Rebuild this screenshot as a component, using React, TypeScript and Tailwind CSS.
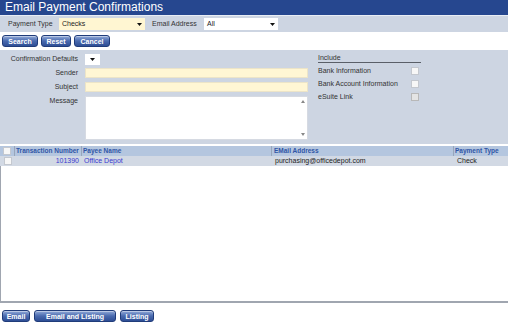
import React from "react";

function Btn({ label, width }: { label: string; width: string }) {
  return (
    <div
      className={`${width} h-[12px] rounded-[3px] border border-[#203c7a] bg-linear-to-b from-[#93abd9] via-[#4a6aae] to-[#2e4e95] text-white font-bold text-[7px] leading-none flex items-center justify-center shadow-[inset_0_1px_0_rgba(255,255,255,0.4)]`}
    >
      {label}
    </div>
  );
}

function Arrow() {
  return (
    <svg width="5" height="3" viewBox="0 0 5 3">
      <path d="M0 0h5L2.5 3z" fill="#111" />
    </svg>
  );
}

function Check({ disabled }: { disabled?: boolean }) {
  return (
    <div
      className={`w-[8px] h-[8px] border ${
        disabled ? "border-[#b8b8b8] bg-[#e4e4e4]" : "border-[#c4c8cf] bg-[#f7f7f7]"
      }`}
    />
  );
}

export default function App() {
  return (
    <div className="w-[508px] h-[328px] bg-white flex flex-col font-['Liberation_Sans',Arial,sans-serif] text-[7px] text-[#333] overflow-hidden">
      {/* title */}
      <div className="h-[15px] bg-[#26478f] text-white text-[12px] leading-[14px] px-[5px] border-b border-[#e8edf5] box-content">
        Email Payment Confirmations
      </div>

      {/* filter row */}
      <div className="h-[16px] bg-[#cdd5e2] flex items-center">
        <span className="ml-[8px] w-[51px]">Payment Type</span>
        <div className="w-[86px] h-[12px] bg-[#fff6d2] flex items-center justify-between px-[3px]">
          <span className="text-[#222]">Checks</span>
          <Arrow />
        </div>
        <span className="ml-[7px] w-[52px]">Email Address</span>
        <div className="w-[74px] h-[12px] bg-white flex items-center justify-between px-[3px]">
          <span className="text-[#222]">All</span>
          <Arrow />
        </div>
      </div>

      {/* top buttons */}
      <div className="h-[18px] flex items-center gap-[3px] pl-[2px]">
        <Btn label="Search" width="w-[36px]" />
        <Btn label="Reset" width="w-[30px]" />
        <Btn label="Cancel" width="w-[36px]" />
      </div>

      {/* form panel */}
      <div className="h-[94px] bg-[#cdd5e2] flex pt-[4px]">
        <div className="flex flex-col">
          <div className="flex items-center h-[11px]">
            <span className="w-[78px] text-right whitespace-nowrap">Confirmation Defaults</span>
            <div className="ml-[7px] w-[15px] h-[11px] bg-white flex items-center justify-center">
              <Arrow />
            </div>
          </div>
          <div className="flex items-center h-[10px] mt-[3px]">
            <span className="w-[78px] text-right">Sender</span>
            <div className="ml-[7px] w-[223px] h-[10px] bg-[#fff6d4] border border-[#ece4c8]" />
          </div>
          <div className="flex items-center h-[10px] mt-[4px]">
            <span className="w-[78px] text-right">Subject</span>
            <div className="ml-[7px] w-[223px] h-[10px] bg-[#fff6d4] border border-[#ece4c8]" />
          </div>
          <div className="flex items-start h-[44px] mt-[4px]">
            <span className="w-[78px] text-right leading-[9px]">Message</span>
            <div className="ml-[7px] w-[223px] h-[44px] bg-white border border-[#d6dae2] flex justify-end">
              <div className="w-[8px] flex flex-col justify-between items-center py-[3px]">
                <svg width="4" height="3" viewBox="0 0 4 3">
                  <path d="M0 3h4L2 0z" fill="#888" />
                </svg>
                <svg width="4" height="3" viewBox="0 0 4 3">
                  <path d="M0 0h4L2 3z" fill="#888" />
                </svg>
              </div>
            </div>
          </div>
        </div>

        <div className="ml-[10px] w-[103px] flex flex-col">
          <div className="h-[8px] leading-[8px] border-b border-[#5a5f68] box-content">Include</div>
          <div className="flex items-center justify-between h-[8px] mt-[4px] pr-[2px]">
            <span>Bank Information</span>
            <Check />
          </div>
          <div className="flex items-center justify-between h-[8px] mt-[5px] pr-[2px]">
            <span>Bank Account Information</span>
            <Check />
          </div>
          <div className="flex items-center justify-between h-[8px] mt-[5px] pr-[2px]">
            <span>eSuite Link</span>
            <Check disabled />
          </div>
        </div>
      </div>

      {/* grid */}
      <div className="h-[2px] bg-white" />
      <div className="h-[10px] bg-[#b4c6df] flex items-center font-bold text-[6.5px] text-[#2f55a6] whitespace-nowrap">
        <div className="w-[15px] h-full flex items-center justify-center border-r border-[#98a6bb]">
          <Check />
        </div>
        <div className="w-[67px] h-full pl-[1px] leading-[10px] border-r border-[#98a6bb] overflow-hidden">
          Transaction Number
        </div>
        <div className="w-[189px] h-full pl-[1px] leading-[10px]">Payee Name</div>
        <div className="w-[182px] h-full pl-[2px] leading-[10px] border-l border-[#98a6bb]">EMail Address</div>
        <div className="flex-1 h-full pl-[1px] leading-[10px] border-l border-[#98a6bb]">Payment Type</div>
      </div>
      <div className="h-[10px] bg-[#d2d9e4] flex items-center whitespace-nowrap">
        <div className="w-[15px] flex items-center justify-center">
          <Check />
        </div>
        <div className="w-[64px] text-right text-[#3a3ad0]">101390</div>
        <div className="w-[192px] pl-[5px] text-[#3a3ad0]">Office Depot</div>
        <div className="w-[182px] pl-[4px] text-[#222]">purchasing@officedepot.com</div>
        <div className="flex-1 pl-[4px] text-[#222]">Check</div>
      </div>
      <div className="h-[137px] bg-white border-l border-b-2 border-[#a0a6b0]" />

      {/* bottom buttons */}
      <div className="flex-1 flex items-center gap-[4px] pl-[2px] pt-[1px]">
        <Btn label="Email" width="w-[28px]" />
        <Btn label="Email and Listing" width="w-[82px]" />
        <Btn label="Listing" width="w-[34px]" />
      </div>
    </div>
  );
}
